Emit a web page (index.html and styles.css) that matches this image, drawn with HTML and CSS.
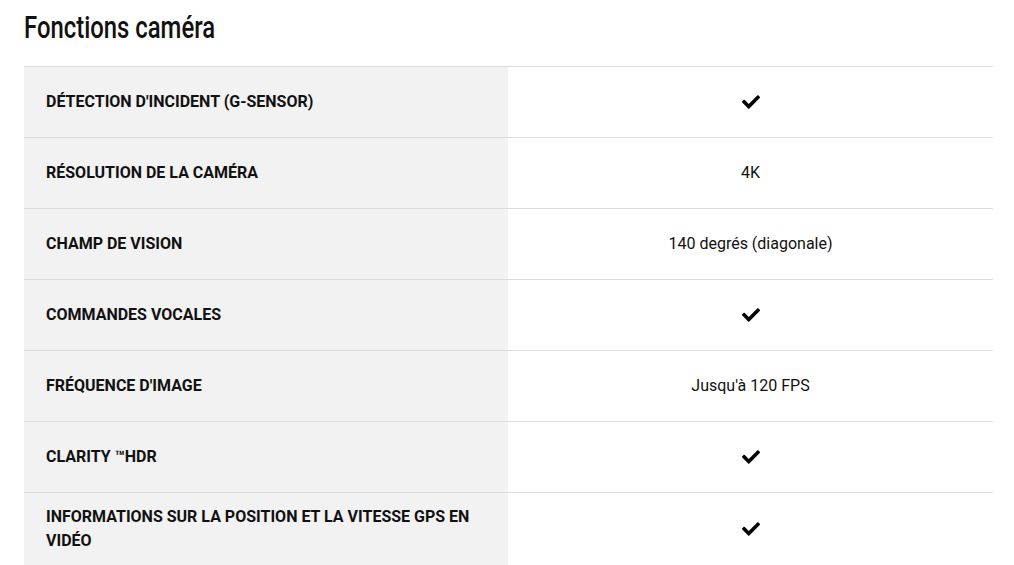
FILE: index.html
```html
<!DOCTYPE html>
<html lang="fr">
<head>
<meta charset="utf-8">
<link rel="stylesheet" href="styles.css">
</head>
<body>
<section class="specs">
  <h2 class="specs-title"><span class="specs-title-text">Fonctions caméra</span></h2>
  <div class="spec-table">
    <div class="spec-row">
      <div class="spec-label">DÉTECTION D'INCIDENT (G-SENSOR)</div>
      <div class="spec-value"><svg class="check" viewBox="0 0 512 512"><path d="M173.9 439.4l-166.4-166.4c-10-10-10-26.2 0-36.2l36.2-36.2c10-10 26.2-10 36.2 0L192 312.7 432.1 72.6c10-10 26.2-10 36.2 0l36.2 36.2c10 10 10 26.2 0 36.2l-294.4 294.4c-10 10-26.2 10-36.2 0z"/></svg></div>
    </div>
    <div class="spec-row">
      <div class="spec-label">RÉSOLUTION DE LA CAMÉRA</div>
      <div class="spec-value">4K</div>
    </div>
    <div class="spec-row">
      <div class="spec-label">CHAMP DE VISION</div>
      <div class="spec-value">140 degrés (diagonale)</div>
    </div>
    <div class="spec-row">
      <div class="spec-label">COMMANDES VOCALES</div>
      <div class="spec-value"><svg class="check" viewBox="0 0 512 512"><path d="M173.9 439.4l-166.4-166.4c-10-10-10-26.2 0-36.2l36.2-36.2c10-10 26.2-10 36.2 0L192 312.7 432.1 72.6c10-10 26.2-10 36.2 0l36.2 36.2c10 10 10 26.2 0 36.2l-294.4 294.4c-10 10-26.2 10-36.2 0z"/></svg></div>
    </div>
    <div class="spec-row">
      <div class="spec-label">FRÉQUENCE D'IMAGE</div>
      <div class="spec-value">Jusqu'à 120 FPS</div>
    </div>
    <div class="spec-row">
      <div class="spec-label">CLARITY&nbsp;™HDR</div>
      <div class="spec-value"><svg class="check" viewBox="0 0 512 512"><path d="M173.9 439.4l-166.4-166.4c-10-10-10-26.2 0-36.2l36.2-36.2c10-10 26.2-10 36.2 0L192 312.7 432.1 72.6c10-10 26.2-10 36.2 0l36.2 36.2c10 10 10 26.2 0 36.2l-294.4 294.4c-10 10-26.2 10-36.2 0z"/></svg></div>
    </div>
    <div class="spec-row">
      <div class="spec-label">INFORMATIONS SUR LA POSITION ET LA VITESSE GPS EN VIDÉO</div>
      <div class="spec-value"><svg class="check" viewBox="0 0 512 512"><path d="M173.9 439.4l-166.4-166.4c-10-10-10-26.2 0-36.2l36.2-36.2c10-10 26.2-10 36.2 0L192 312.7 432.1 72.6c10-10 26.2-10 36.2 0l36.2 36.2c10 10 10 26.2 0 36.2l-294.4 294.4c-10 10-26.2 10-36.2 0z"/></svg></div>
    </div>
  </div>
</section>
</body>
</html>
```
FILE: styles.css
```css
html, body {
  margin: 0;
  padding: 0;
  background: #fff;
}
body {
  font-family: Roboto, "Liberation Sans", sans-serif;
  color: #111;
}
.specs {
  padding: 0 21px 0 24px;
}
.specs-title {
  margin: 0;
  padding-top: 10px;
  height: 66px;
  box-sizing: border-box;
  font-family: Roboto, "Liberation Sans", sans-serif;
  font-weight: 500;
  font-size: 31px;
  line-height: 36px;
  color: #111;
}
.specs-title-text {
  display: inline-block;
  transform: scaleX(0.77);
  transform-origin: left center;
  white-space: nowrap;
}
.spec-table {
  border-top: 1px solid #dcdcdc;
}
.spec-row {
  display: grid;
  grid-template-columns: 484px 1fr;
  border-bottom: 1px solid #dcdcdc;
  min-height: 70px;
}
.spec-label {
  background: #f2f2f2;
  padding: 12px 22px;
  display: flex;
  align-items: center;
  font-weight: 700;
  font-size: 16px;
  line-height: 24px;
  color: #111;
}
.spec-value {
  display: flex;
  align-items: center;
  justify-content: center;
  font-size: 16px;
  line-height: 24px;
  color: #111;
  padding: 12px 22px;
}
.check {
  width: 18px;
  height: 18px;
  fill: #000;
}
```
